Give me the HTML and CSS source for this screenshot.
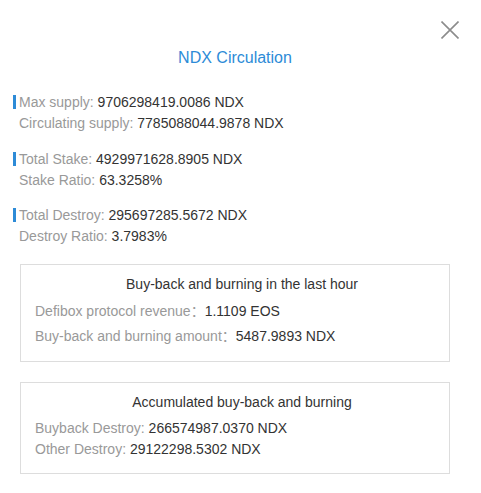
FILE: index.html
```html
<!DOCTYPE html>
<html lang="en">
<head>
<meta charset="utf-8">
<title>NDX Circulation</title>
<link rel="stylesheet" href="styles.css">
</head>
<body>
<div class="modal">
  <button class="close" aria-label="Close">
    <svg width="18" height="18" viewBox="0 0 18 18"><path d="M0.5 0.5 L17.5 17.5 M17.5 0.5 L0.5 17.5" stroke="#8c8c8c" stroke-width="1.6" fill="none"/></svg>
  </button>
  <h2 class="modal-title">NDX Circulation</h2>

  <div class="stats">
    <div class="group">
      <div class="row row-lead"><span class="label">Max supply: </span><span class="value">9706298419.0086 NDX</span></div>
      <div class="row"><span class="label">Circulating supply: </span><span class="value">7785088044.9878 NDX</span></div>
    </div>
    <div class="group">
      <div class="row row-lead"><span class="label">Total Stake: </span><span class="value">4929971628.8905 NDX</span></div>
      <div class="row"><span class="label">Stake Ratio: </span><span class="value">63.3258%</span></div>
    </div>
    <div class="group">
      <div class="row row-lead"><span class="label">Total Destroy: </span><span class="value">295697285.5672 NDX</span></div>
      <div class="row"><span class="label">Destroy Ratio: </span><span class="value">3.7983%</span></div>
    </div>
  </div>

  <div class="box box-hour">
    <div class="box-title">Buy-back and burning in the last hour</div>
    <div class="box-row first"><span class="label">Defibox protocol revenue：</span><span class="value">1.1109 EOS</span></div>
    <div class="box-row"><span class="label">Buy-back and burning amount：</span><span class="value">5487.9893 NDX</span></div>
  </div>

  <div class="box box-total">
    <div class="box-title">Accumulated buy-back and burning</div>
    <div class="box-row first"><span class="label">Buyback Destroy: </span><span class="value">266574987.0370 NDX</span></div>
    <div class="box-row"><span class="label">Other Destroy: </span><span class="value">29122298.5302 NDX</span></div>
  </div>
</div>
</body>
</html>
```

FILE: styles.css
```css
html, body {
  margin: 0;
  padding: 0;
  background: #ffffff;
}

body {
  font-family: "Liberation Sans", Arial, "Noto Sans CJK SC", sans-serif;
  color: #333333;
}

.modal {
  position: relative;
  width: 470px;
  padding-top: 47px;
  padding-bottom: 20px;
}

.close {
  position: absolute;
  top: 21px;
  left: 441px;
  width: 18px;
  height: 18px;
  padding: 0;
  margin: 0;
  border: 0;
  background: transparent;
  cursor: pointer;
}

.close svg {
  display: block;
}

.modal-title {
  margin: 0 0 23px 0;
  font-size: 16px;
  line-height: 22px;
  font-weight: normal;
  text-align: center;
  color: #2d8bd7;
}

.stats {
  padding-left: 19px;
}

.group + .group {
  margin-top: 14.5px;
}

.row {
  font-size: 14px;
  line-height: 21px;
  white-space: nowrap;
}

.row-lead::before {
  content: "";
  display: inline-block;
  width: 3px;
  height: 14px;
  margin-left: -6px;
  margin-right: 3px;
  vertical-align: -2px;
  background: #2d8bd7;
}

.label {
  color: #999999;
}

.value {
  color: #333333;
}

.box {
  box-sizing: border-box;
  width: 430px;
  margin-left: 20px;
  border: 1px solid #dddddd;
  padding: 9px 0 12px 14px;
  font-size: 14px;
}

.box-hour {
  margin-top: 17px;
}

.box-total {
  margin-top: 20px;
  padding-bottom: 13px;
}

.box-title {
  text-align: center;
  line-height: 20px;
  color: #333333;
}

.box-row {
  white-space: nowrap;
}

.box-hour .box-row {
  line-height: 25px;
}

.box-hour .box-row.first {
  margin-top: 5px;
}

.box-total .box-row {
  line-height: 21px;
}

.box-total .box-row.first {
  margin-top: 6px;
}
```
